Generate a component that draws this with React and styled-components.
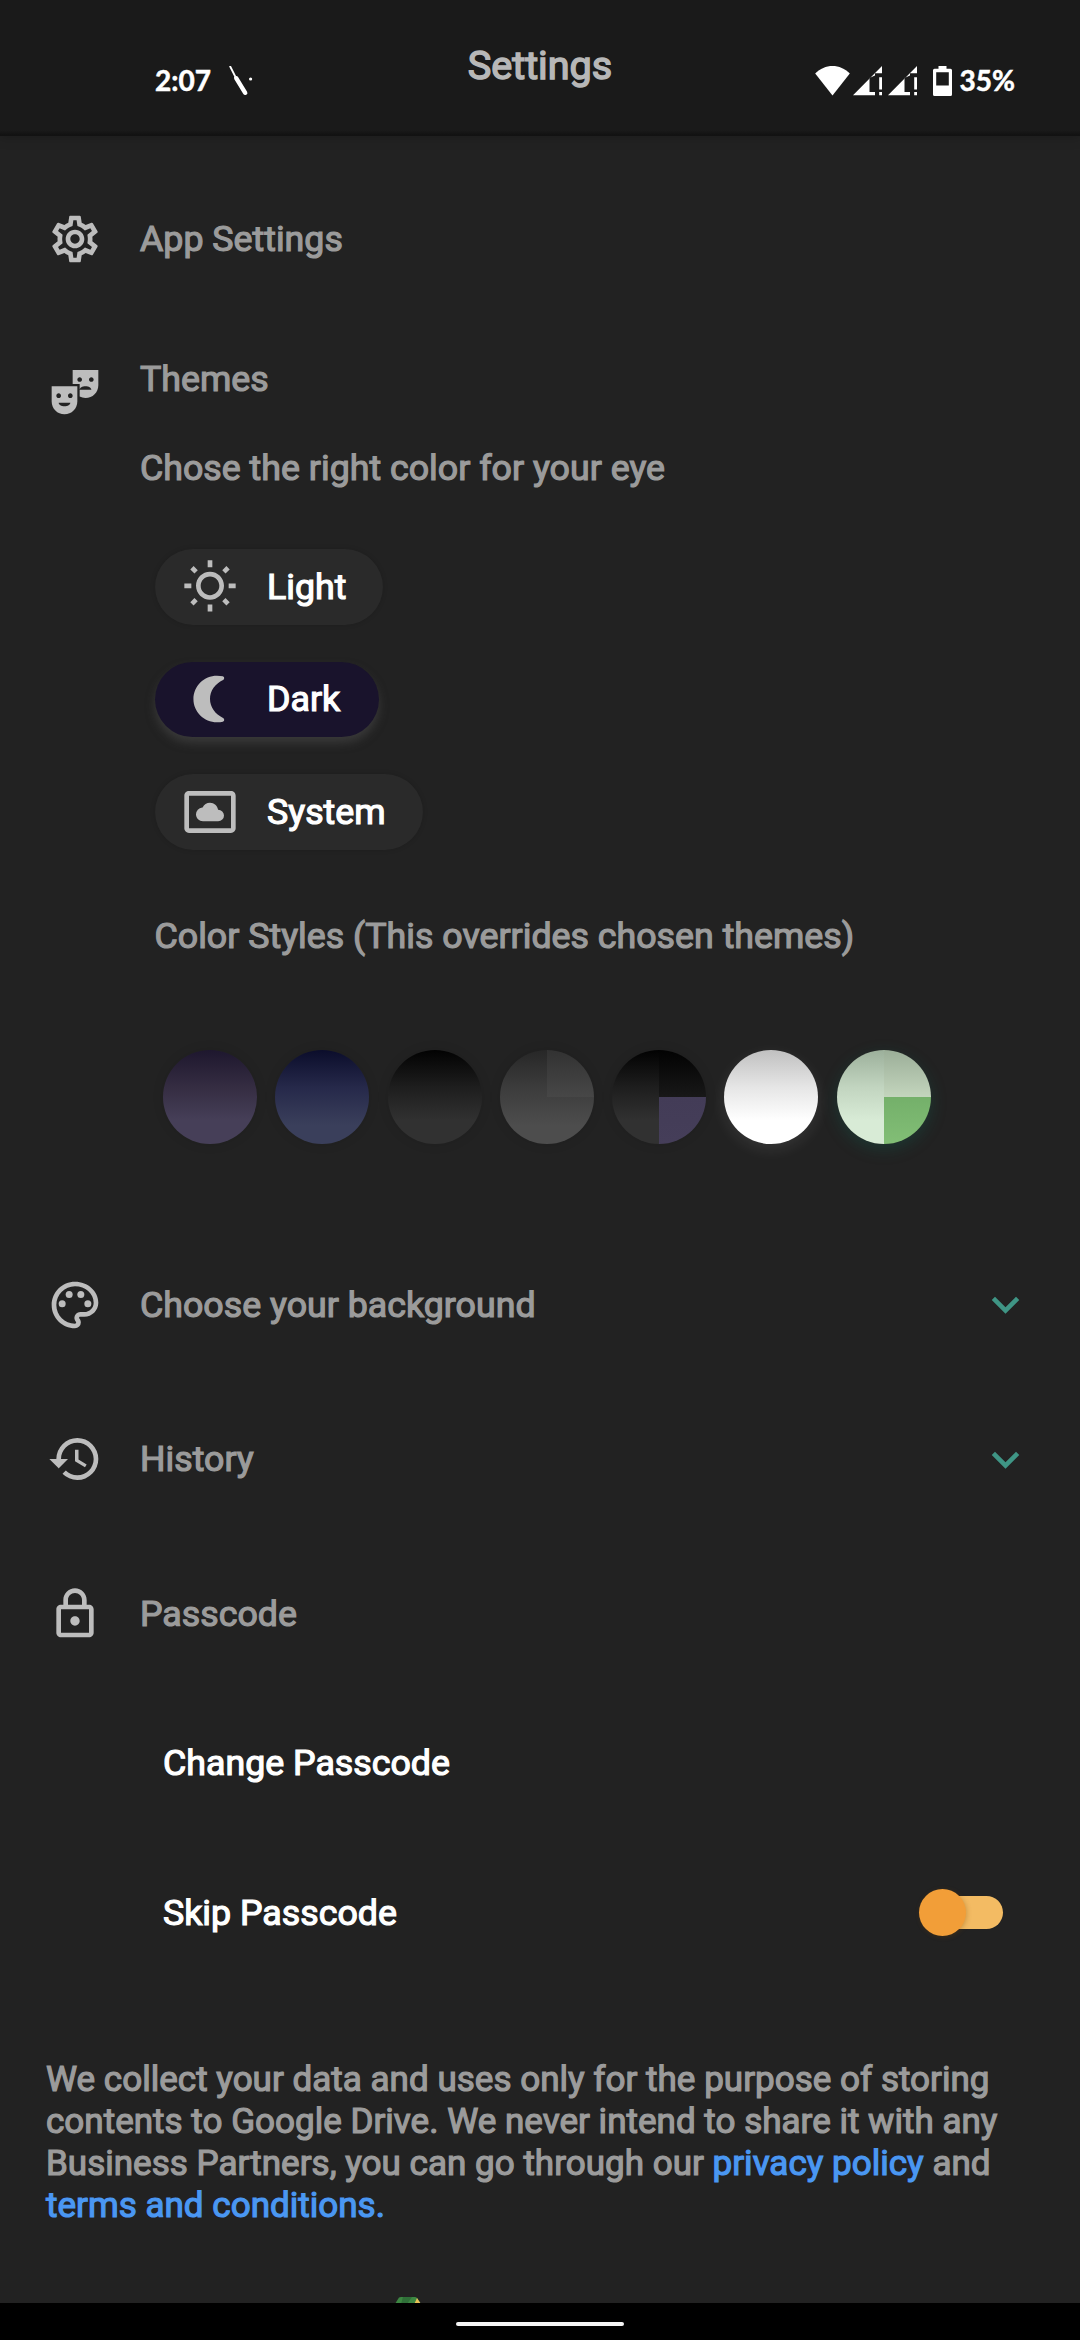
import React from "react";
import styled, { createGlobalStyle } from "styled-components";
import {
  MdOutlineSettings,
  MdTheaterComedy,
  MdOutlinePalette,
  MdHistory,
  MdOutlineLock,
  MdOutlineWbSunny,
  MdSettingsSystemDaydream,
  MdKeyboardArrowDown,
} from "react-icons/md";

const GlobalStyle = createGlobalStyle`
  * { box-sizing: border-box; }
  html, body { margin: 0; padding: 0; background: #222222; }
`;

const Screen = styled.div`
  width: 1080px;
  height: 2340px;
  overflow: hidden;
  display: flex;
  flex-direction: column;
  background: #222222;
  color: #9b9b9b;
  font-family: Roboto, "Liberation Sans", sans-serif;
  font-size: 35.75px;
  line-height: 42px;
  -webkit-text-stroke: 1.2px currentColor;
`;

const Header = styled.header`
  flex: none;
  height: 136px;
  display: grid;
  grid-template-columns: 1fr auto 1fr;
  background: linear-gradient(#1a1a1a 0, #1a1a1a 130px, #121212 135px);
  box-shadow: 0 0 12px rgba(0, 0, 0, 0.25);
`;

const Title = styled.h1`
  margin: 0;
  padding-top: 42px;
  font-size: 39.6px;
  line-height: 48px;
  font-weight: 400;
  color: #b7b7b7;
  -webkit-text-stroke: 1.5px currentColor;
`;

const StatusGroup = styled.div`
  display: flex;
  align-items: center;
  justify-content: ${(p) => (p.$end ? "flex-end" : "flex-start")};
  height: 30px;
  margin-top: 65.5px;
  padding: ${(p) => (p.$end ? "0 65px 0 0" : "0 0 0 155px")};
  color: #ffffff;
  font-family: Lato, "Open Sans", sans-serif;
  font-weight: 700;
  font-size: 28px;
  line-height: 29px;
  -webkit-text-stroke: 0.5px currentColor;

  svg { flex: none; display: block; margin-left: ${(p) => (p.$end ? 0 : "17px")}; }
`;

const SignalIcons = styled.div`
  display: flex;
  align-items: center;
  margin-right: 8px;
  svg + svg { margin-left: 3px; }
  svg + svg + svg { margin-left: 6px; }
  svg + svg + svg + svg { margin-left: 16px; }
`;

const Main = styled.main`
  flex: 1;
  min-height: 0;
  overflow: hidden;
  display: flex;
  flex-direction: column;
  padding: 75px 47px 0 47px;
`;

const Row = styled.div`
  flex: none;
  display: flex;
  align-items: center;
  height: 56px;
  margin-top: ${(p) => p.$gap || 0}px;
`;

const RowIcon = styled.span`
  flex: none;
  width: 56px;
  height: 56px;
  margin-right: 37px;
  margin-top: ${(p) => p.$drop || 0}px;
  color: #bdbdbd;
  svg { display: block; width: 56px; height: 56px; }
`;

const RowLabel = styled.span`
  flex: 1;
`;

const Chevron = styled(MdKeyboardArrowDown)`
  flex: none;
  width: 55px;
  height: 55px;
  color: #3f9585;
`;

const ThemeSection = styled.section`
  flex: none;
  display: flex;
  align-items: flex-start;
  margin-top: 91px;
`;

const ThemeBody = styled.div`
  display: flex;
  flex-direction: column;
`;

const Hint = styled.p`
  margin: 47px 0 60px;
`;

const Options = styled.div`
  display: flex;
  flex-direction: column;
  align-items: flex-start;
  gap: 37px;
  padding-left: 15px;
`;

const Option = styled.button`
  display: flex;
  align-items: center;
  height: 75.6px;
  padding: 0 ${(p) => p.$end || 37}px 0 27px;
  border: 0;
  border-radius: 38px;
  background: ${(p) => (p.$active ? "#19132c" : "#2a2a2a")};
  box-shadow: ${(p) =>
    p.$active
      ? "0 6px 10px rgba(80, 80, 80, 0.5)"
      : "0 0 5px rgba(0, 0, 0, 0.15)"};
  color: #ffffff;
  font: inherit;
  -webkit-text-stroke: inherit;

  svg { display: block; width: 56px; height: 56px; margin-right: 29px; color: #bdbdbd; }
`;

const StylesTitle = styled.p`
  margin: 65px 0 93px 14.5px;
`;

const Swatches = styled.div`
  display: flex;
  gap: 18.3px;
  padding-left: 23px;
`;

const Swatch = styled.div`
  width: 94px;
  height: 94px;
  overflow: hidden;
  border-radius: 50%;
  background: ${(p) => p.$fill};
  box-shadow: ${(p) => p.$glow || "0 0 12px rgba(0, 0, 0, 0.1)"};
`;

const SubRow = styled.div`
  flex: none;
  display: flex;
  align-items: center;
  justify-content: space-between;
  height: 42px;
  margin-top: ${(p) => p.$gap}px;
  padding: 0 30px 0 116px;
  color: #ffffff;
`;

const Track = styled.span`
  display: flex;
  align-items: center;
  width: 80px;
  height: 33px;
  border-radius: 17px;
  background: #f3bb63;
`;

const Thumb = styled.span`
  flex: none;
  width: 47px;
  height: 47px;
  margin-left: -4px;
  border-radius: 50%;
  background: #f29e38;
  box-shadow: 1px 1px 5px rgba(120, 70, 0, 0.3);
`;

const Notice = styled.p`
  flex: none;
  margin: 124px 0 0 -1px;
  font-size: 35.05px;
`;

const Link = styled.a`
  color: #4a97f2;
`;

const DriveMark = styled.svg`
  flex: none;
  display: block;
  width: 26px;
  height: 26px;
  margin: 71px 0 0 348px;
`;

const NavBar = styled.nav`
  flex: none;
  height: 37px;
  padding-top: 18.5px;
  background: #000000;
`;

const Pill = styled.div`
  width: 168px;
  height: 4px;
  margin: 0 auto;
  border-radius: 2px;
  background: #f4f4f4;
`;

const SliceIcon = () => (
  <svg width="26" height="30" viewBox="0 0 26 30">
    <path d="M2.2 .5 7.5 11" stroke="#fff" strokeWidth="1.8" strokeLinecap="round" />
    <path d="M8.2 12.2 17.2 26.8" stroke="#fff" strokeWidth="4.4" strokeLinecap="round" />
    <circle cx="22.6" cy="13" r="1.6" fill="#fff" />
  </svg>
);

const WifiIcon = () => (
  <svg width="35" height="30" viewBox="0 0 35 30">
    <path d="M.2 7.4C5.2 2.6 11 0 17.5 0s12.3 2.6 17.3 7.4L17.5 29.4z" fill="#fff" />
  </svg>
);

const SignalIcon = () => (
  <svg width="29" height="30" viewBox="0 0 29 30">
    <path
      d="M0 29.2 29 0V7.2H22V9.5L16.5 12V26H22V29.2zM26.2 11.3H29V23.5H26.2zM26.2 26H29V29.2H26.2z"
      fill="#fff"
    />
  </svg>
);

const BatteryIcon = () => (
  <svg width="19" height="30" viewBox="0 0 19 30">
    <path
      fillRule="evenodd"
      d="M5.5 0H13.5V2.8H17.5Q19 2.8 19 4.3V28.5Q19 30 17.5 30H1.5Q0 30 0 28.5V4.3Q0 2.8 1.5 2.8H5.5zM3.2 6.2V19.5H15.8V6.2z"
      fill="#fff"
    />
  </svg>
);

const MoonIcon = () => (
  <svg viewBox="0 0 24 24" fill="currentColor">
    <path d="M15 2c.95 0 1.8.1 2.5.3.8.3.75 1.25.1 1.6C14.2 5.5 12 8.5 12 12s2.2 6.5 5.6 8.1c.65.35.7 1.3-.1 1.6-.7.2-1.55.3-2.5.3C9.4 22 4.9 17.5 4.9 12S9.4 2 15 2z" />
  </svg>
);

const swatches = [
  { fill: "linear-gradient(#1e172e 0%, #352d42 40%, #463f58 75%, #463f58 100%)" },
  { fill: "linear-gradient(#0b0d2b 0%, #26294a 40%, #3a3f5b 80%, #3a3f5b 100%)" },
  { fill: "linear-gradient(#020202 0%, #1e1e1e 40%, #313131 75%, #313131 100%)" },
  {
    fill: `linear-gradient(#323232, #474747) 100% 0 / 50% 50% no-repeat,
      linear-gradient(#272727 0%, #3c3c3c 40%, #4d4d4d 80%, #4d4d4d 100%)`,
  },
  {
    fill: `linear-gradient(#433c57, #453e59) 100% 100% / 50% 50% no-repeat,
      linear-gradient(#020202, #181818) 100% 0 / 50% 50% no-repeat,
      linear-gradient(#020202 0%, #1e1e1e 40%, #313131 75%, #313131 100%)`,
  },
  {
    fill: "linear-gradient(#c0c0c0 0%, #e6e6e6 40%, #ffffff 75%, #ffffff 100%)",
    glow: "0 5px 16px rgba(255, 255, 255, 0.09)",
  },
  {
    fill: `linear-gradient(#74b06a, #82be76) 100% 100% / 50% 50% no-repeat,
      linear-gradient(#9bae98, #c3d5bd) 100% 0 / 50% 50% no-repeat,
      linear-gradient(#9cb09b 0%, #c2d5c0 40%, #d8ebd6 75%, #d8ebd6 100%)`,
    glow: "0 5px 16px rgba(20, 100, 85, 0.32)",
  },
];

export default function App() {
  return (
    <Screen>
      <GlobalStyle />
      <Header>
        <StatusGroup>
          2:07
          <SliceIcon />
        </StatusGroup>
        <Title>Settings</Title>
        <StatusGroup $end>
          <SignalIcons>
            <WifiIcon />
            <SignalIcon />
            <SignalIcon />
            <BatteryIcon />
          </SignalIcons>
          35%
        </StatusGroup>
      </Header>

      <Main>
        <Row>
          <RowIcon><MdOutlineSettings /></RowIcon>
          <RowLabel>App Settings</RowLabel>
        </Row>

        <ThemeSection>
          <RowIcon $drop={5}><MdTheaterComedy /></RowIcon>
          <ThemeBody>
            <RowLabel>Themes</RowLabel>
            <Hint>Chose the right color for your eye</Hint>
            <Options>
              <Option><MdOutlineWbSunny />Light</Option>
              <Option $active $end={39}><MoonIcon />Dark</Option>
              <Option><MdSettingsSystemDaydream />System</Option>
            </Options>
            <StylesTitle>Color Styles (This overrides chosen themes)</StylesTitle>
            <Swatches>
              {swatches.map((s, i) => (
                <Swatch key={i} $fill={s.fill} $glow={s.glow} />
              ))}
            </Swatches>
          </ThemeBody>
        </ThemeSection>

        <Row $gap={133}>
          <RowIcon><MdOutlinePalette /></RowIcon>
          <RowLabel>Choose your background</RowLabel>
          <Chevron />
        </Row>
        <Row $gap={98.7}>
          <RowIcon><MdHistory /></RowIcon>
          <RowLabel>History</RowLabel>
          <Chevron />
        </Row>
        <Row $gap={98.5}>
          <RowIcon><MdOutlineLock /></RowIcon>
          <RowLabel>Passcode</RowLabel>
        </Row>

        <SubRow $gap={100}>Change Passcode</SubRow>
        <SubRow $gap={108}>
          Skip Passcode
          <Track><Thumb /></Track>
        </SubRow>

        <Notice>
          We collect your data and uses only for the purpose of storing
          <br />
          contents to Google Drive. We never intend to share it with any
          <br />
          Business Partners, you can go through our <Link>privacy policy</Link> and
          <br />
          <Link>terms and conditions.</Link>
        </Notice>

        <DriveMark viewBox="0 0 26 26">
          <path d="M4 .5Q5 0 6 0H20Q21 0 22 1L26 7V26H0V7z" fill="#3c8742" />
          <path d="M8 0H17L12 7H6z" fill="#2f6f38" />
          <path d="M22 1 26 7V10H18z" fill="#e8c257" />
        </DriveMark>
      </Main>

      <NavBar><Pill /></NavBar>
    </Screen>
  );
}
